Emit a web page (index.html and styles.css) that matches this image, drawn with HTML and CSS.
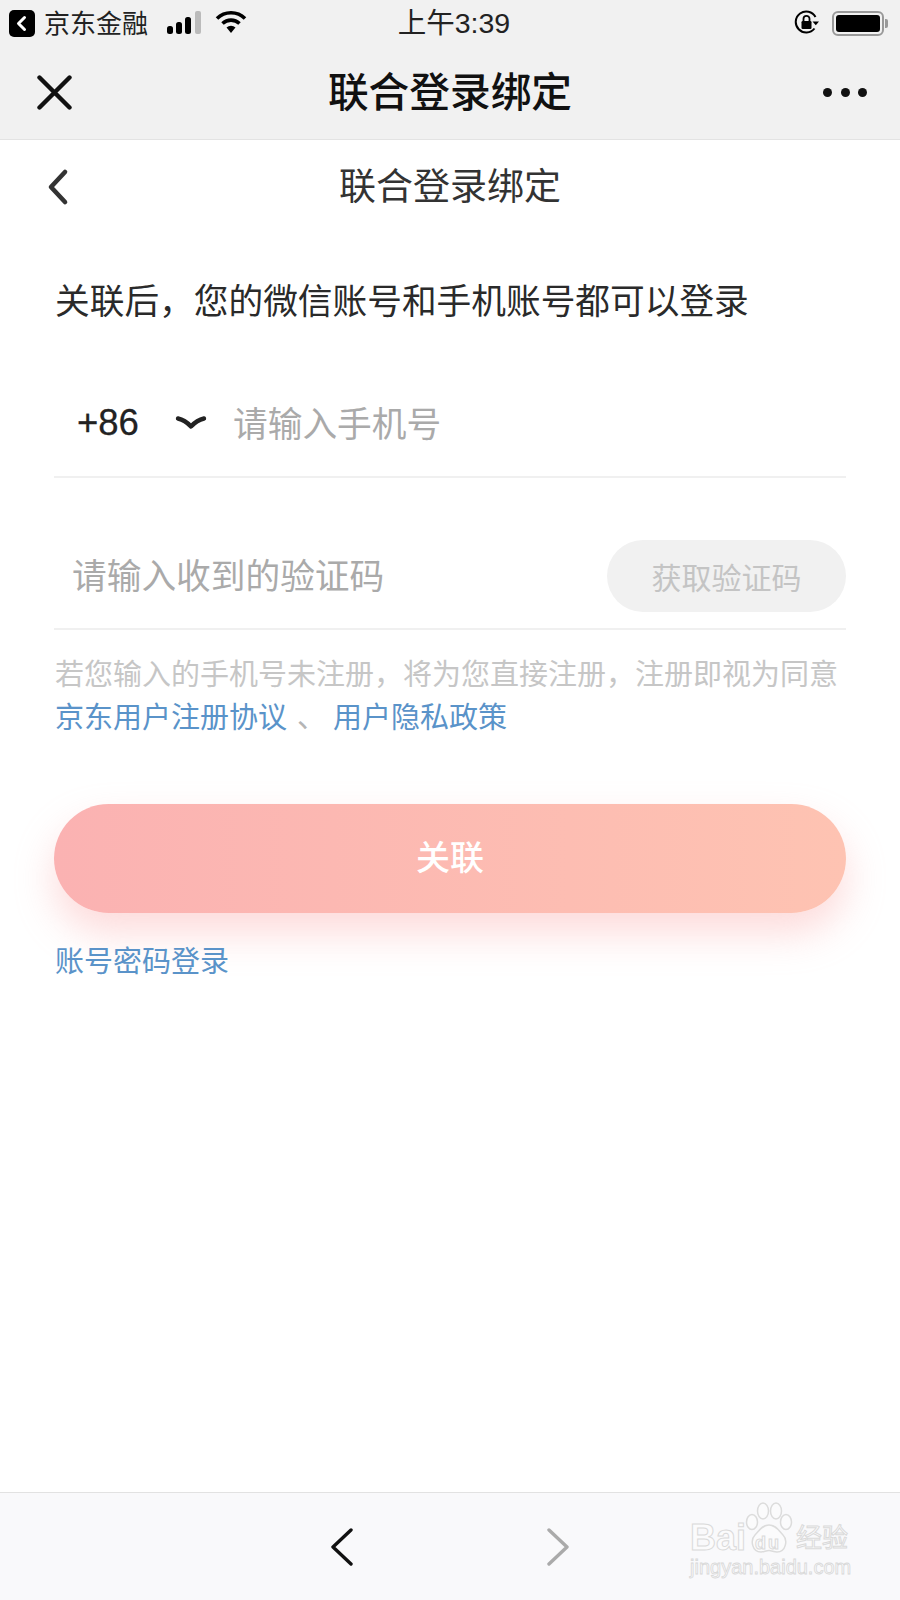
FILE: index.html
```html
<!DOCTYPE html>
<html lang="zh-CN">
<head>
<meta charset="utf-8">
<title>联合登录绑定</title>
<link rel="stylesheet" href="styles.css">
</head>
<body>
<div class="screen">
  <header class="chrome">
    <div class="status">
      <div class="status-left">
        <svg class="back-badge" width="26" height="27" viewBox="0 0 26 27"><rect width="26" height="27" rx="5" fill="#000"/><path d="M15.5 7.5 9.5 13.5l6 6" fill="none" stroke="#fff" stroke-width="3" stroke-linecap="round" stroke-linejoin="round"/></svg>
        <span class="carrier">京东金融</span>
        <svg class="signal" width="35" height="24" viewBox="0 0 35 24"><rect x="0" y="15" width="6" height="8" rx="2.5" fill="#000"/><rect x="9" y="11" width="6" height="12" rx="2.5" fill="#000"/><rect x="18" y="6" width="6" height="17" rx="2.5" fill="#000"/><rect x="28" y="0" width="6" height="23" rx="2" fill="#bbb"/></svg>
        <svg class="wifi" width="32" height="24" viewBox="0 0 32 24"><path d="M2 8.5a20 20 0 0 1 28 0" fill="none" stroke="#000" stroke-width="3.6"/><path d="M7.5 13.5a12.5 12.5 0 0 1 17 0" fill="none" stroke="#000" stroke-width="3.6"/><path d="M11.5 17.5 16 23l4.5-5.500a6.500 6.500 0 0 0-9 0z" fill="#000"/></svg>
      </div>
      <div class="time">上午3:39</div>
      <div class="status-right">
        <svg width="26" height="26" viewBox="0 0 26 26"><path d="M20.500 18.500A10.500 10.500 0 1 1 21.500 7" fill="none" stroke="#000" stroke-width="2"/><path d="M25 11.500h-6.500l3.300 3.800z" fill="#000"/><rect x="7.500" y="11" width="10" height="8" rx="1.200" fill="#000"/><path d="M9.500 11V8.800a3 3 0 0 1 6 0V11" fill="none" stroke="#000" stroke-width="1.800"/></svg>
        <div class="battery"><div class="battery-fill"></div></div>
        <div class="battery-tip"></div>
      </div>
    </div>
    <div class="nav">
      <svg class="nav-close" width="35" height="35" viewBox="0 0 35 35"><path d="M2.500 2.500l30 30M32.500 2.500l-30 30" fill="none" stroke="#111" stroke-width="4.400" stroke-linecap="round"/></svg>
      <h1 class="nav-title">联合登录绑定</h1>
      <div class="dots"><i></i><i></i><i></i></div>
    </div>
  </header>

  <main class="content">
    <div class="subhead">
      <svg class="sub-back" width="24" height="38" viewBox="0 0 24 38"><path d="M19 4 5 19l14 15" fill="none" stroke="#333" stroke-width="4.600" stroke-linecap="round" stroke-linejoin="round"/></svg>
      <h2 class="sub-title">联合登录绑定</h2>
    </div>
    <div class="form">
      <p class="intro">关联后，您的微信账号和手机账号都可以登录</p>
      <div class="row row-phone">
        <span class="code">+86</span>
        <svg class="caret" width="32" height="17" viewBox="0 0 32 17"><path d="M3 4.500Q10 6 16 12.500 22 6 29 4.500" fill="none" stroke="#222" stroke-width="4.400" stroke-linecap="round" stroke-linejoin="round"/></svg>
        <span class="placeholder">请输入手机号</span>
      </div>
      <div class="row row-code">
        <span class="placeholder code-input">请输入收到的验证码</span>
        <span class="get-code">获取验证码</span>
      </div>
      <p class="note">若您输入的手机号未注册，将为您直接注册，注册即视为同意<br><a class="link">京东用户注册协议</a><span class="sep">、</span><a class="link">用户隐私政策</a></p>
      <button class="submit">关联</button>
      <a class="link password">账号密码登录</a>
    </div>
  </main>

  <footer class="toolbar">
    <svg class="tool-back" width="24" height="38" viewBox="0 0 24 38"><path d="M21 2 3 19l18 17" fill="none" stroke="#111" stroke-width="3.400" stroke-linecap="round" stroke-linejoin="round"/></svg>
    <svg class="tool-forward" width="24" height="38" viewBox="0 0 24 38"><path d="M3 2l18 17L3 36" fill="none" stroke="#aaa" stroke-width="3.400" stroke-linecap="round" stroke-linejoin="round"/></svg>
    <div class="watermark">
      <svg class="paw" width="48" height="52" viewBox="0 0 48 52"><g fill="#fbfbfc" stroke="#dcdcdc" stroke-width="1.500"><ellipse cx="7" cy="20" rx="5.500" ry="7.500"/><ellipse cx="18" cy="9" rx="5.500" ry="8"/><ellipse cx="31" cy="9" rx="5.500" ry="8"/><ellipse cx="41" cy="20" rx="5.500" ry="7.500"/><path d="M24 23c7 0 10 6 14 10 5 5 3 17-6 17-3.500 0-5-1.500-8-1.500S19 50 16 50C7 50 5 38 10 33c4-4 7-10 14-10z"/></g></svg>
      <span class="wm wm-bai">Bai</span>
      <span class="wm wm-du">du</span>
      <span class="wm wm-cn">经验</span>
      <span class="wm wm-url">jingyan.baidu.com</span>
    </div>
  </footer>
</div>
</body>
</html>
```

FILE: styles.css
```css
* { box-sizing: border-box; }
html, body { margin: 0; padding: 0; background: #fff; }
body { font-family: "Noto Sans CJK SC", "Liberation Sans", sans-serif; color: #222; }
h1, h2, p { margin: 0; font-weight: 400; }

.screen { position: relative; width: 900px; height: 1600px; overflow: hidden; display: flex; flex-direction: column; background: #fff; }

.chrome { background: #f1f1f1; border-bottom: 1px solid #e3e3e3; height: 140px; flex: none; }
.status { height: 46px; display: grid; grid-template-columns: 1fr auto 1fr; align-items: center; padding: 0 12px 0 9px; }
.status-left { display: flex; align-items: center; }
.back-badge { margin-top: 1px; }
.carrier { font-size: 26px; line-height: 30px; color: #222; margin: -3px 0 0 9px; }
.signal { margin-left: 19px; }
.wifi { margin-left: 13px; margin-top: -3px; }
.time { font-size: 28.500px; line-height: 32px; color: #222; font-family: "Liberation Sans", "Noto Sans CJK SC", sans-serif; margin-left: 11px; }
.status-right { display: flex; align-items: center; justify-content: flex-end; }
.battery { width: 52px; height: 25px; border: 2px solid #999; border-radius: 6px; padding: 2px; margin-left: 12px; }
.battery-fill { width: 100%; height: 100%; background: #000; border-radius: 3px; }
.battery-tip { width: 3px; height: 9px; background: #999; border-radius: 0 2px 2px 0; margin-left: 1px; }

.nav { height: 93px; position: relative; display: flex; align-items: center; justify-content: space-between; padding: 0 33px 0 37px; }
.nav-title { position: absolute; left: 0; right: 0; top: 13px; text-align: center; font-size: 40.700px; line-height: 62px; font-weight: 500; color: #111; }
.dots { display: flex; gap: 8.500px; }
.dots i { width: 9px; height: 9px; border-radius: 50%; background: #111; display: block; }

.content { flex: 1; display: flex; flex-direction: column; }
.subhead { height: 94px; position: relative; display: flex; align-items: center; padding-left: 46px; }
.sub-title { position: absolute; left: 0; right: 0; top: 17px; text-align: center; font-size: 37px; line-height: 54px; color: #333; }
.form { padding: 0 54px; display: flex; flex-direction: column; }
.intro { font-size: 34.700px; line-height: 50px; padding: 40px 0 45px 1px; color: #2a2a2a; white-space: nowrap; }
.row { display: flex; align-items: center; border-bottom: 2px solid #f0f0f0; }
.row-phone { height: 109px; padding: 0 0 0 23px; }
.code { font-family: "Liberation Sans", sans-serif; font-size: 36.500px; color: #222; width: 100px; flex: none; -webkit-text-stroke: 0.300px #222; }
.caret { flex: none; margin-left: -2px; }
.placeholder { font-size: 34.700px; line-height: 50px; color: #aaa; }
.row-phone .placeholder { margin: 0 0 2px 26px; }
.row-code { height: 152px; padding: 62px 0 17px 18px; justify-content: space-between; }
.code-input { margin-bottom: 4px; }
.get-code { width: 239px; height: 72px; border-radius: 36px; background: #f1f1f1; color: #c4c4c4; font-size: 30px; line-height: 72px; text-align: center; }
.note { font-size: 29px; line-height: 43px; padding: 21px 0 0 1px; color: #c6c6c6; white-space: nowrap; }
.link { color: #5a93c9; }
.sep { color: #b5b5b5; margin: 0 7px 0 10px; }
.submit { display: block; width: 792px; height: 109px; margin: 67px 0 0; border: 0; border-radius: 55px; padding: 0 0 5px; background: linear-gradient(90deg, #fbb2b2, #fec3b2); box-shadow: 0 20px 38px rgba(251, 170, 170, 0.42); color: #fff; font: 500 34px/1 "Noto Sans CJK SC", sans-serif; }
.password { font-size: 29px; line-height: 44px; margin: 24px 0 0 1px; }

.toolbar { height: 108px; flex: none; position: relative; background: #f9f9fb; border-top: 1px solid #e2e2e2; display: flex; align-items: center; padding: 0 0 0 330px; }
.tool-forward { margin-left: 192px; }

.watermark { position: absolute; left: 690px; top: 9px; width: 170px; height: 90px; }
.paw { position: absolute; left: 55px; top: 0; }
.wm { position: absolute; line-height: 1; white-space: nowrap; color: #fbfbfc; font-family: "Liberation Sans", sans-serif; -webkit-text-stroke: 1px #dadada; }
.wm-bai { left: 0; top: 18px; font-size: 36px; font-weight: 700; }
.wm-du { left: 65px; top: 32px; font-size: 18px; font-weight: 700; letter-spacing: 2px; }
.wm-cn { left: 106px; top: 21px; font-family: "Noto Sans CJK SC", sans-serif; font-size: 26px; }
.wm-url { left: 0; top: 55px; font-size: 20px; -webkit-text-stroke: 0.800px #d8d8d8; }
```
